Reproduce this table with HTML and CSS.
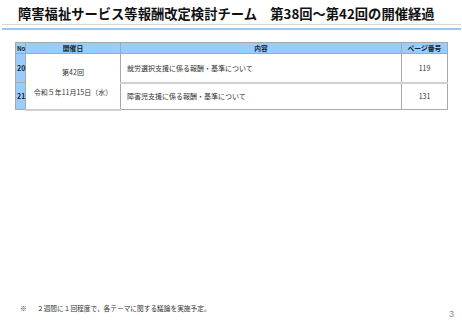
FILE: index.html
```html
<!DOCTYPE html>
<html lang="ja">
<head>
<meta charset="utf-8">
<link rel="stylesheet" href="styles.css">
</head>
<body>
<div class="page">
  <header class="head">
    <h1 class="title">障害福祉サービス等報酬改定検討チーム　第38回～第42回の開催経過</h1>
    <div class="rule-grey"></div>
    <div class="rule-blue"></div>
  </header>
  <table class="tbl">
    <colgroup>
      <col class="c-no"><col class="c-date"><col class="c-body"><col class="c-page">
    </colgroup>
    <thead>
      <tr class="hrow">
        <th class="no">No</th><th>開催日</th><th>内容</th><th>ページ番号</th>
      </tr>
    </thead>
    <tbody>
      <tr class="r1">
        <td class="no">20</td>
        <td class="date" rowspan="2"><div class="d1">第42回</div><div class="d2">令和５年11月15日（水）</div></td>
        <td class="body">就労選択支援に係る報酬・基準について</td>
        <td class="pg">119</td>
      </tr>
      <tr class="r2">
        <td class="no">21</td>
        <td class="body">障害児支援に係る報酬・基準について</td>
        <td class="pg">131</td>
      </tr>
    </tbody>
  </table>
  <div class="spacer"></div>
  <footer class="foot">
    <p class="note"><span class="mark">※</span>２週間に１回程度で、各テーマに関する議論を実施予定。</p>
    <span class="pnum">3</span>
  </footer>
</div>
</body>
</html>
```
FILE: styles.css
```css
* { box-sizing: border-box; }
html, body { margin: 0; padding: 0; background: #fff; }
body { font-family: "Noto Sans CJK JP", "Noto Sans", sans-serif; color: #222; }
.page { width: 462px; height: 320px; display: flex; flex-direction: column; }
.head { padding-top: 6px; }
.title {
  margin: 0 0 0 18px;
  font-size: 13.3px;
  line-height: 16px;
  font-weight: bold;
  color: #111;
  letter-spacing: 0;
  white-space: nowrap;
}
.rule-grey { margin: 2px 1px 0 2px; height: 1px; background: #d8d8d8; }
.rule-blue { margin: 3px 1px 0 2px; height: 2px; background: #9cc8f0; }
.tbl {
  margin: 12px 0 0 15px;
  width: 432px;
  border-collapse: collapse;
  table-layout: fixed;
  font-size: 7px;
  color: #333;
}
.c-no { width: 10px; }
.c-date { width: 95px; }
.c-body { width: 281px; }
.c-page { width: 46px; }
.tbl th, .tbl td { border: 1px solid #a8a8a8; padding: 0; }
.hrow { height: 11px; }
.tbl th { background: #99ccff; font-weight: bold; color: #222; text-align: center; line-height: 9px; font-size: 6.8px; }
.tbl th.no { text-align: left; padding-left: 1px; font-size: 6px; }
.tbl td.no { background: #99ccff; font-weight: bold; font-size: 7px; text-align: left; padding-left: 1px; color: #222; }
.r1 { height: 29px; }
.r2 { height: 27px; }
.r1 td { border-bottom: 2px solid #d0d0d0; }
.r1 td.no { border-bottom: 1px solid #a8a8a8; }
.date { text-align: center; vertical-align: middle; }
.d1 { line-height: 9px; margin-bottom: 11px; margin-top: 2px; }
.d2 { line-height: 9px; }
.body { padding-left: 6px !important; text-align: left; }
.pg { text-align: center; }
.spacer { flex: 1; }
.foot { display: flex; justify-content: space-between; align-items: flex-end; padding: 0 8px 1px 20px; }
.note { margin: 0 0 7px 0; font-size: 6.7px; line-height: 8px; color: #333; }
.mark { display: inline-block; width: 17px; }
.pnum { font-family: "Liberation Sans", sans-serif; font-size: 9px; line-height: 10px; color: #888; }
```
